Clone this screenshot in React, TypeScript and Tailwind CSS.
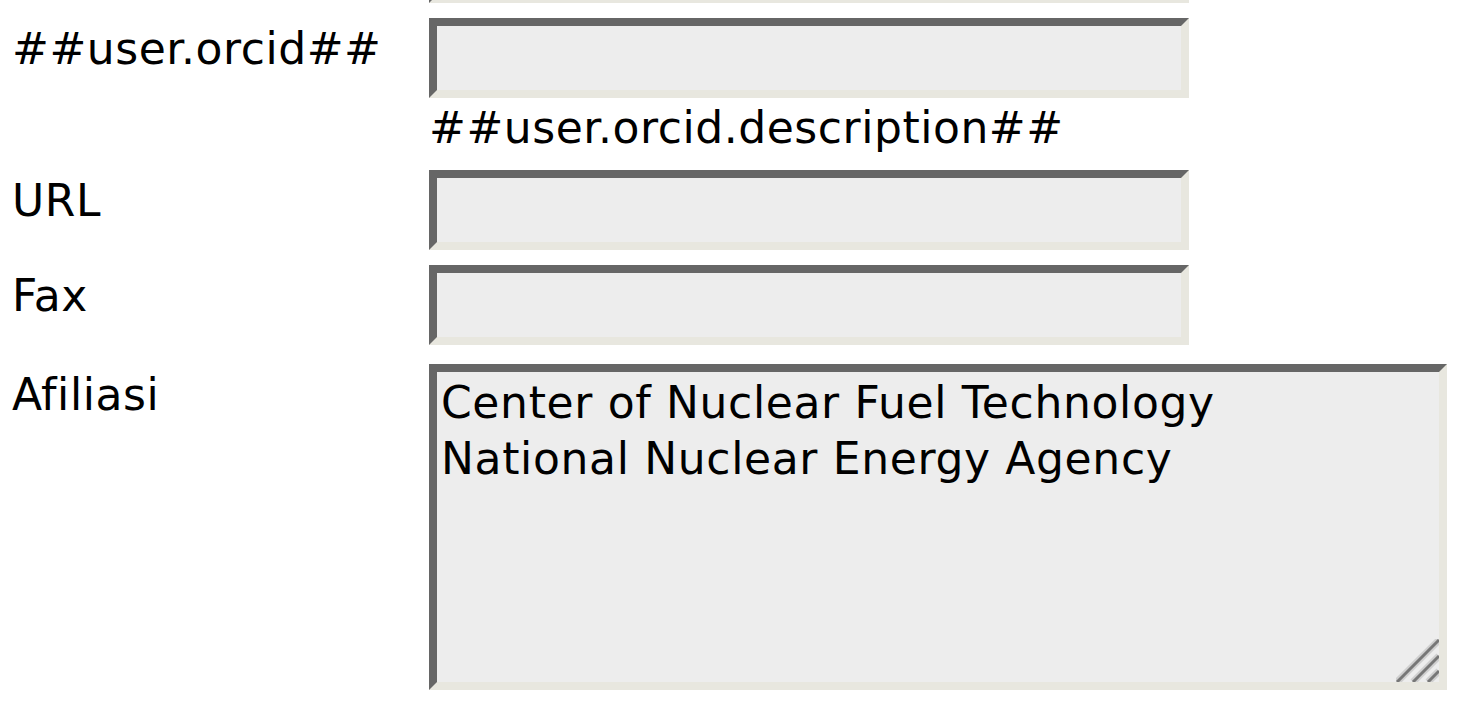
const FIELD =
  "block box-border border-[8px] border-t-[#666666] border-l-[#666666] border-r-[#e8e7df] border-b-[#e8e7df] bg-[#ededed] outline-none";

function TextField({ className = "" }: { className?: string }) {
  return <input type="text" defaultValue="" className={`${FIELD} w-[760px] h-[80px] px-[4px] text-[44px] ${className}`} />;
}

function Label({ children }: { children: React.ReactNode }) {
  return <div className="w-[417px] shrink-0 pt-[5px] leading-[51px]">{children}</div>;
}

function ResizeGrip() {
  return (
    <svg className="absolute right-[8px] bottom-[8px] pointer-events-none" width="43" height="43" viewBox="0 0 43 43">
      <g stroke="#cfcfcf" strokeWidth="7" strokeLinecap="butt">
        <line x1="1" y1="43" x2="43" y2="1" />
        <line x1="17" y1="43" x2="43" y2="17" />
        <line x1="32" y1="43" x2="43" y2="32" />
      </g>
      <g stroke="#777777" strokeWidth="3" strokeLinecap="butt">
        <line x1="1" y1="43" x2="43" y2="1" />
        <line x1="17" y1="43" x2="43" y2="17" />
        <line x1="32" y1="43" x2="43" y2="32" />
      </g>
    </svg>
  );
}

export default function App() {
  return (
    <div className="h-[706px] overflow-hidden bg-white text-black text-[44px] tracking-[0.55px] font-['DejaVu_Sans',Verdana,sans-serif]">
      <div className="pl-[12px]">
        {/* bottom edge of the field above, scrolled off */}
        <div className="ml-[417px] h-[3px] overflow-hidden flex items-end">
          <div className={`${FIELD} w-[760px] h-[80px] shrink-0`} />
        </div>

        <div className="flex mt-[15px]">
          <Label>##user.orcid##</Label>
          <div>
            <TextField />
            <div className="pt-[4px] leading-[51px]">##user.orcid.description##</div>
          </div>
        </div>

        <div className="flex mt-[17px]">
          <Label>URL</Label>
          <TextField />
        </div>

        <div className="flex mt-[15px]">
          <Label>Fax</Label>
          <TextField />
        </div>

        <div className="flex mt-[19px]">
          <Label>Afiliasi</Label>
          <div className="relative">
            <textarea
              defaultValue={"Center of Nuclear Fuel Technology\nNational Nuclear Energy Agency"}
              className={`${FIELD} w-[1018px] h-[326px] resize-none overflow-hidden pt-[3px] pl-[4px] text-[44px] leading-[56px] tracking-[0.65px] font-['DejaVu_Sans',Verdana,sans-serif]`}
            />
            <ResizeGrip />
          </div>
        </div>
      </div>
    </div>
  );
}
